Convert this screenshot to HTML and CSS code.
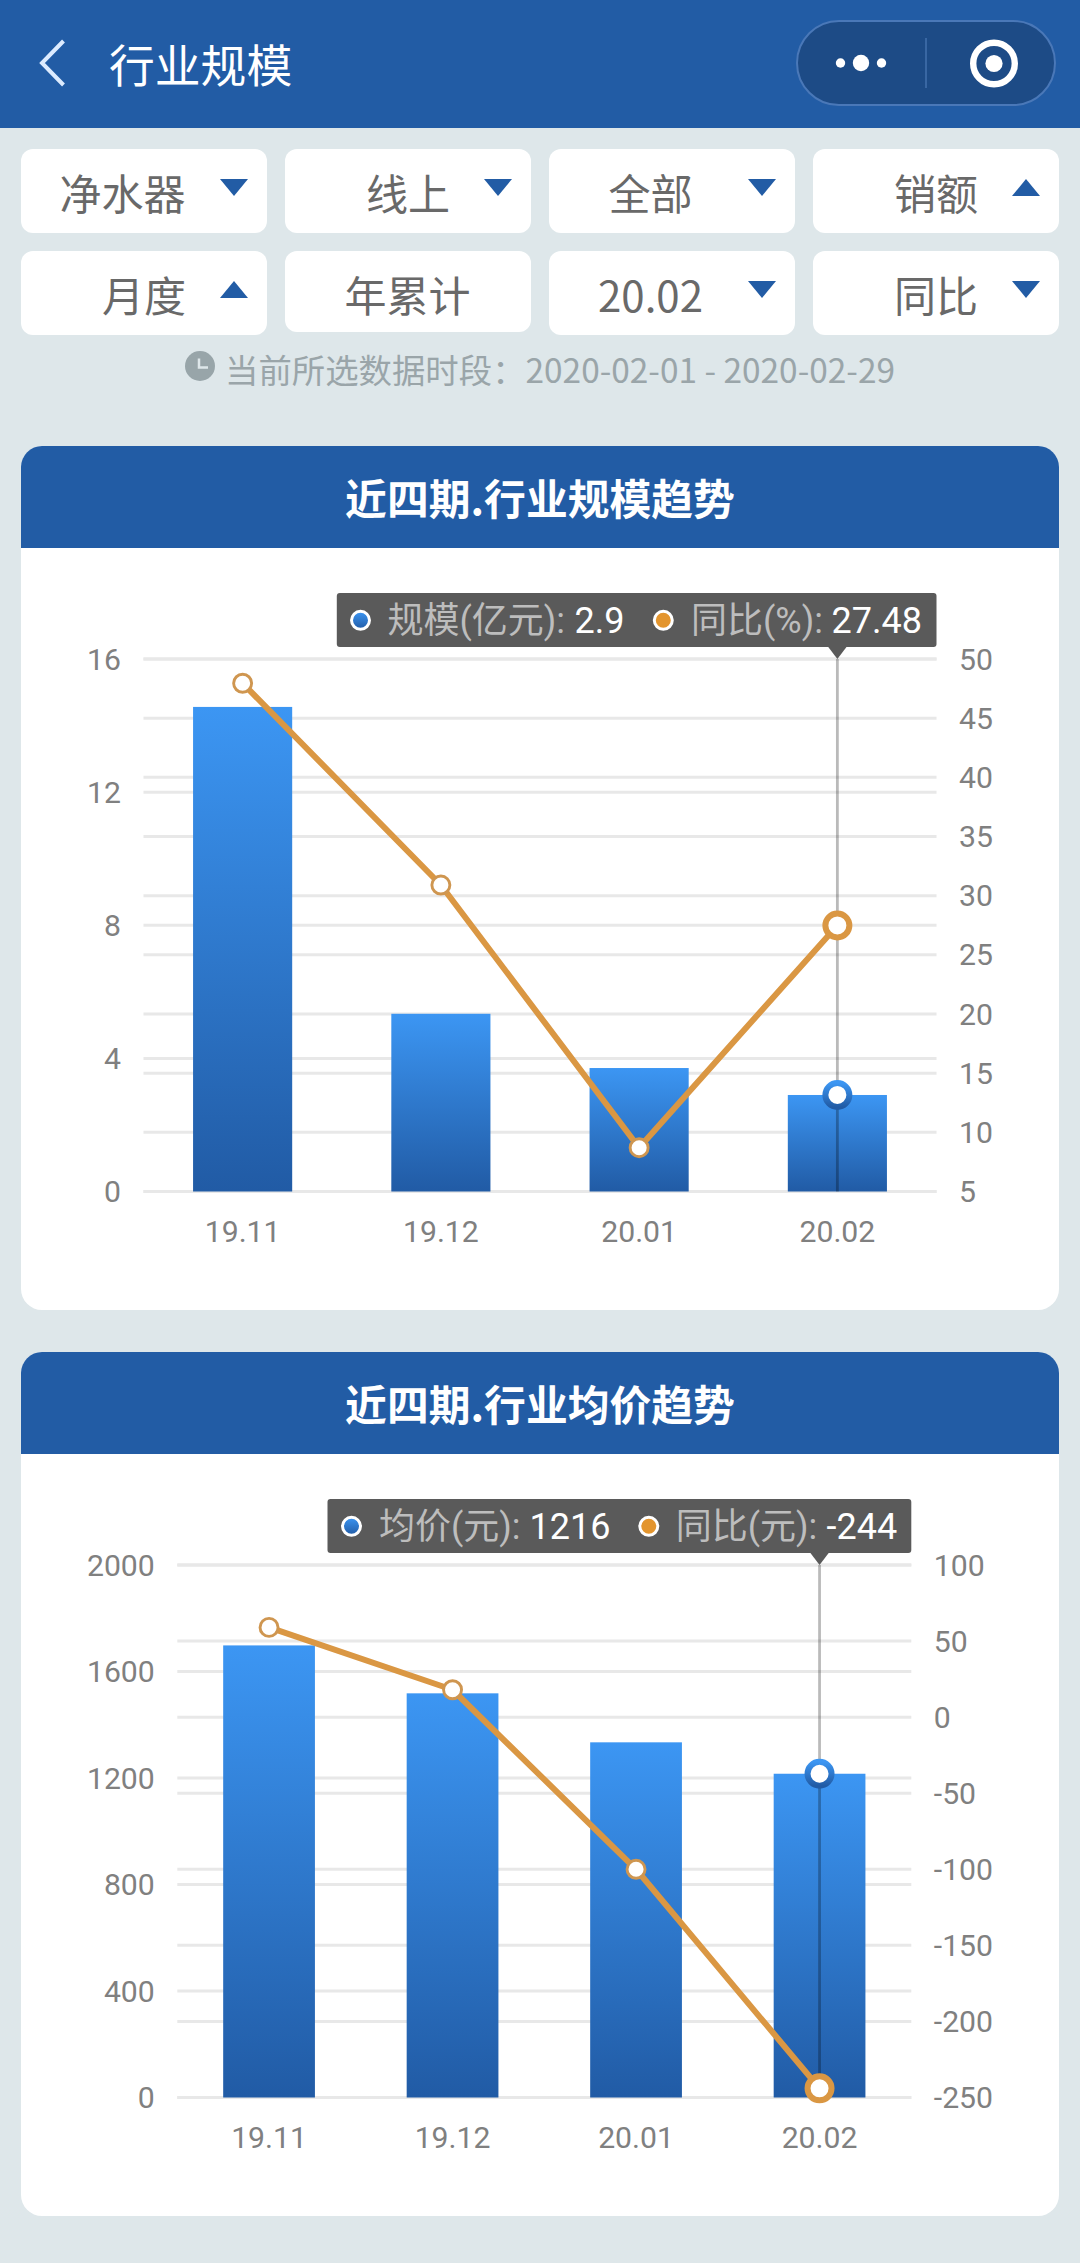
FILE: index.html
```html
<!DOCTYPE html>
<html lang="zh-CN">
<head>
  <meta charset="UTF-8">
  <meta name="viewport" content="width=device-width, initial-scale=1.0">
  <title>行业规模</title>
  <link rel="stylesheet" href="styles.css">
</head>
<body>

  <header class="navbar">
    <svg class="back" width="28" height="50" viewBox="0 0 28 50">
      <path d="M24.5 3 L3 25 L24.5 47" />
    </svg>
    <h1>行业规模</h1>
    <div class="capsule">
      <svg width="260" height="86" viewBox="0 0 260 86">
        <rect class="capsule-bg" x="1" y="1" width="258" height="84" rx="42" />
        <circle cx="44.5" cy="43" r="4.7" />
        <circle cx="65" cy="43" r="8.2" />
        <circle cx="85.5" cy="43" r="4.7" />
        <path class="capsule-line" d="M130 18 V68" />
        <circle class="capsule-ring" cx="198" cy="43.5" r="20.8" />
        <circle cx="198" cy="43.5" r="8.6" />
      </svg>
    </div>
  </header>

  <main>
    <!-- 筛选条件 -->
    <div class="filters">
      <div class="filter"><span>净水器</span><i class="arrow"></i></div>
      <div class="filter end"><span>线上</span><i class="arrow"></i></div>
      <div class="filter"><span>全部</span><i class="arrow"></i></div>
      <div class="filter end"><span>销额</span><i class="arrow up"></i></div>
      <div class="filter end"><span>月度</span><i class="arrow up"></i></div>
      <div class="filter plain"><span>年累计</span></div>
      <div class="filter"><span>20.02</span><i class="arrow"></i></div>
      <div class="filter end"><span>同比</span><i class="arrow"></i></div>
    </div>

    <p class="period">
      <svg width="30" height="30" viewBox="0 0 30 30">
        <circle cx="15" cy="15" r="15" />
        <path d="M14 7.5 V16.5 H23" />
      </svg>
      <span>当前所选数据时段：2020-02-01 - 2020-02-29</span>
    </p>

    <section class="card">
      <h2>近四期.行业规模趋势</h2>
      <svg class="chart" id="chart-scale" width="1038" height="762" viewBox="0 0 1038 762"></svg>
    </section>

    <section class="card">
      <h2>近四期.行业均价趋势</h2>
      <svg class="chart" id="chart-price" width="1038" height="762" viewBox="0 0 1038 762"></svg>
    </section>
  </main>

  <script>
    const TOP = 111;
    const BOTTOM = 643.5;

    function drawChart(id, c) {
      const yLeft = v => BOTTOM - (v - c.left.min) / (c.left.max - c.left.min) * (BOTTOM - TOP);
      const yRight = v => BOTTOM - (v - c.right.min) / (c.right.max - c.right.min) * (BOTTOM - TOP);
      const step = (c.x2 - c.x1) / c.labels.length;
      const cx = i => c.x1 + step * (i + 0.5);
      const last = c.labels.length - 1;
      let s = `<defs><linearGradient id="${id}-g" x1="0" y1="0" x2="0" y2="1">
        <stop offset="0" stop-color="#3c96f3"/><stop offset="1" stop-color="#215ba5"/>
      </linearGradient></defs>`;

      // 左右两个坐标轴各有自己的网格线
      for (let v = c.left.min; v <= c.left.max; v += c.left.step) {
        s += `<path class="grid" d="M${c.x1} ${yLeft(v)} H${c.x2}"/>`;
        s += `<text class="tick" text-anchor="end" x="${c.x1 - 22.5}" y="${yLeft(v) + 10.5}">${v}</text>`;
      }
      for (let v = c.right.min; v <= c.right.max; v += c.right.step) {
        s += `<path class="grid" d="M${c.x1} ${yRight(v)} H${c.x2}"/>`;
        s += `<text class="tick" x="${c.x2 + 22.5}" y="${yRight(v) + 10.5}">${v}</text>`;
      }

      // 柱状图
      c.bars.forEach((v, i) => {
        s += `<rect fill="url(#${id}-g)" x="${cx(i) - step / 4}" y="${yLeft(v)}" width="${step / 2}" height="${BOTTOM - yLeft(v)}"/>`;
        s += `<text class="tick" text-anchor="middle" x="${cx(i)}" y="694">${c.labels[i]}</text>`;
      });

      // 折线
      s += `<path class="pointer" d="M${cx(last)} ${TOP} V${BOTTOM}"/>`;
      s += `<polyline class="line" points="${c.line.map((v, i) => cx(i) + ',' + yRight(v)).join(' ')}"/>`;
      c.line.forEach((v, i) => {
        s += `<circle class="${i === last ? 'dot active' : 'dot'}" cx="${cx(i)}" cy="${yRight(v)}" r="${i === last ? 12 : 9}"/>`;
      });
      s += `<circle class="dot active" style="stroke:url(#${id}-g)" cx="${cx(last)}" cy="${yLeft(c.bars[last])}" r="12"/>`;

      // tooltip
      s += `<rect class="tip" x="${c.tip.x}" y="45" width="${c.x2 - c.tip.x}" height="54" rx="3"/>`;
      s += `<path class="tip" d="M${cx(last) - 9.5} 98.5 h19 l-9.5 12.5 z"/>`;
      c.tip.items.forEach((t, i) => {
        s += `<circle class="tip-dot" fill="${i ? '#e3952e' : `url(#${id}-g)`}" cx="${t.dot}" cy="72.3" r="9"/>`;
        s += `<text class="tip-name" x="${t.nameX}" y="85">${t.name}:</text>`;
        s += `<text class="tip-value" x="${t.valueX}" y="85">${t.value}</text>`;
      });

      document.getElementById(id).innerHTML = s;
    }

    drawChart("chart-scale", {
      x1: 122.5, x2: 915.5,
      labels: ["19.11", "19.12", "20.01", "20.02"],
      left: { min: 0, max: 16, step: 4 },
      right: { min: 5, max: 50, step: 5 },
      bars: [14.56, 5.34, 3.71, 2.9],
      line: [47.95, 30.9, 8.7, 27.48],
      tip: {
        x: 315.8,
        items: [
          { dot: 339.5, nameX: 366.5, name: "规模(亿元)", valueX: 553.5, value: "2.9" },
          { dot: 642.3, nameX: 670, name: "同比(%)", valueX: 810.5, value: "27.48" }
        ]
      }
    });

    drawChart("chart-price", {
      x1: 156.3, x2: 890.3,
      labels: ["19.11", "19.12", "20.01", "20.02"],
      left: { min: 0, max: 2000, step: 400 },
      right: { min: -250, max: 100, step: 50 },
      bars: [1698, 1518, 1334, 1216],
      line: [59, 18, -100, -244],
      tip: {
        x: 306.5,
        items: [
          { dot: 330.5, nameX: 358, name: "均价(元)", valueX: 508.5, value: "1216" },
          { dot: 627.8, nameX: 654.7, name: "同比(元)", valueX: 805.5, value: "-244" }
        ]
      }
    });
  </script>
</body>
</html>
```

FILE: styles.css
```css
* {
  box-sizing: border-box;
  margin: 0;
  padding: 0;
}
body {
  background-color: #dee7ea;
  font-family: "Noto Sans CJK SC", sans-serif;
}
svg {
  display: block;
}
.navbar {
  display: flex;
  align-items: center;
  height: 128px;
  padding: 0 24px 2px 39px;
  background-color: #225ca5;
  color: #fff;
}
.navbar h1 {
  flex: 1;
  margin-left: 42px;
  font-size: 45.8px;
  font-weight: 400;
  line-height: 60px;
}
.back path {
  fill: none;
  stroke: #dcebff;
  stroke-width: 4;
}
.capsule circle {
  fill: #fff;
}
.capsule .capsule-bg {
  fill: #1d4b86;
  stroke: #4a78b8;
  stroke-width: 2;
}
.capsule .capsule-line {
  stroke: #4370ad;
  stroke-width: 1.5;
}
.capsule .capsule-ring {
  fill: none;
  stroke: #fff;
  stroke-width: 6.4;
}
main {
  padding: 21px 21px 47px;
}
.filters {
  display: grid;
  grid-template-columns: repeat(4, 246px);
  gap: 18px;
}
.filter {
  display: flex;
  align-items: center;
  justify-content: flex-end;
  height: 84px;
  padding-right: 19px;
  border-radius: 12px;
  background-color: #fff;
  color: #696969;
  font-size: 42px;
  line-height: 60px;
}
.filter span {
  flex: 1;
  padding: 2px 0 0 4px;
  text-align: center;
}
.filter.end span {
  padding-right: 34px;
  text-align: right;
}
.filter.plain {
  height: 81px;
  padding: 0;
}
.filter.plain span {
  padding: 4px 1px 0 0;
}
.arrow {
  margin-bottom: 7px;
  border: 14.5px solid transparent;
  border-top: 17px solid #225ca5;
  border-bottom: 0;
}
.arrow.up {
  border-top: 0;
  border-bottom: 17px solid #225ca5;
}
.period {
  display: flex;
  justify-content: center;
  gap: 10px;
  height: 111px;
  padding-top: 10px;
  color: #9aa5a9;
  font-size: 33.4px;
  line-height: 48px;
}
.period svg {
  margin-top: 6px;
}
.period circle {
  fill: #98a5a9;
}
.period path {
  fill: none;
  stroke: #dee7ea;
  stroke-width: 2.5;
}
.card {
  overflow: hidden;
  margin-bottom: 42px;
  border-radius: 21px;
  background-color: #fff;
}
.card:last-child {
  margin-bottom: 0;
}
.card h2 {
  height: 102px;
  background-color: #225ca5;
  color: #fff;
  font-size: 41.8px;
  font-weight: 700;
  line-height: 102px;
  text-align: center;
}
.chart {
  font-family: Roboto, "Noto Sans CJK SC", sans-serif;
}
.grid {
  stroke: #e8e8e8;
  stroke-width: 3;
}
.tick {
  fill: #808080;
  font-size: 30.2px;
}
.pointer {
  stroke: rgba(0, 0, 0, 0.27);
  stroke-width: 2.8;
}
.line {
  fill: none;
  stroke: #da9743;
  stroke-width: 6;
  stroke-linejoin: round;
}
.dot {
  fill: #fff;
  stroke: #cf9650;
  stroke-width: 2.9;
}
.dot.active {
  stroke: #da9743;
  stroke-width: 6;
}
.tip {
  fill: #5a5a5a;
}
.tip-dot {
  stroke: #fff;
  stroke-width: 3;
}
.tip-name {
  fill: #bdbdbd;
  font-size: 36px;
}
.tip-value {
  fill: #fff;
  font-size: 36px;
}
```
